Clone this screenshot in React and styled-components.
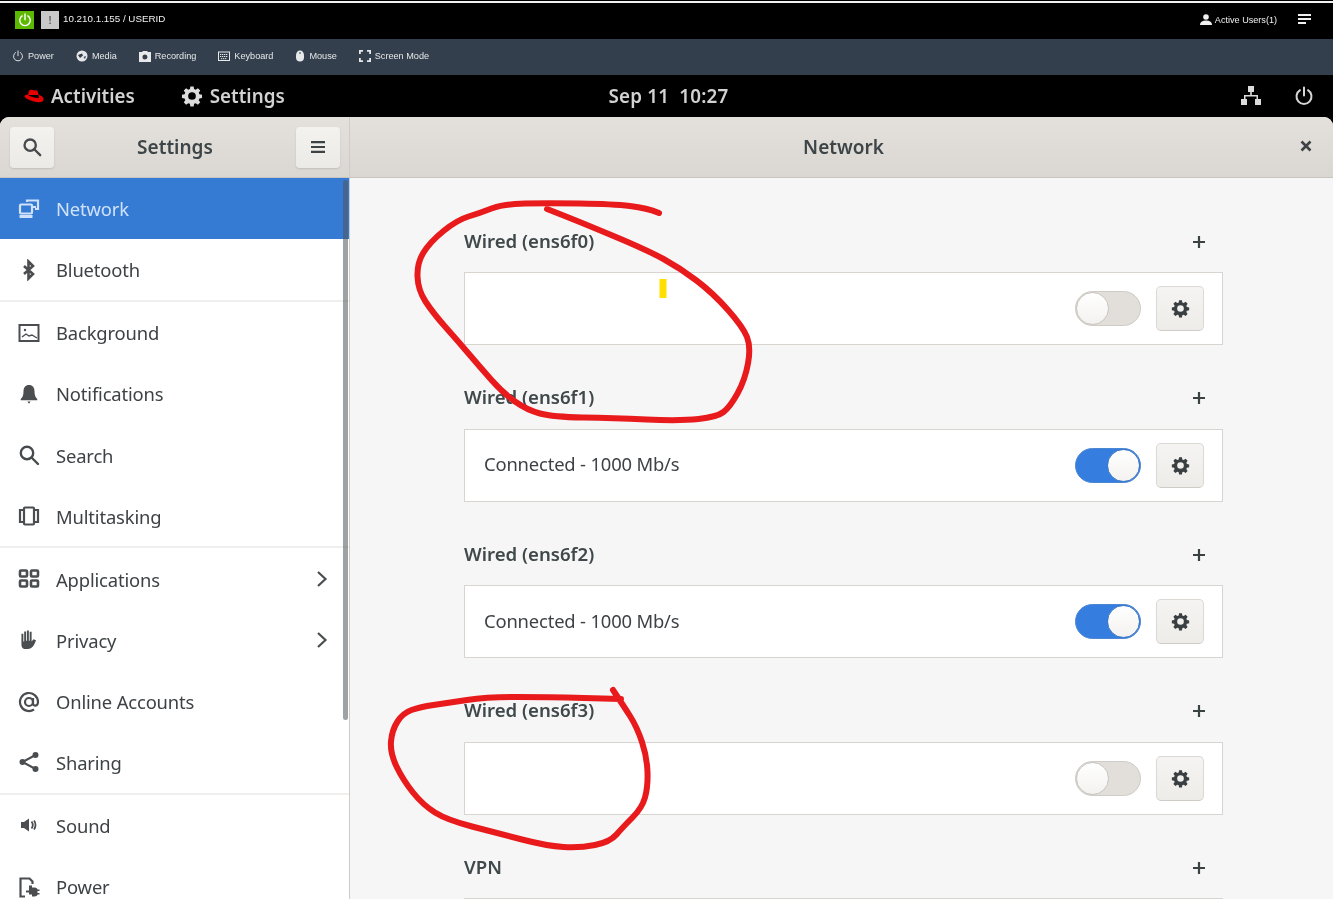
import React from "react";
import styled, { createGlobalStyle } from "styled-components";

const Global = createGlobalStyle`
  html, body { margin: 0; padding: 0; background: #000; }
  body { height: 899px; overflow: hidden; font-family: "Noto Sans", "Open Sans", sans-serif; }
`;

const Page = styled.div`
  position: relative;
  width: 1333px;
  height: 899px;
  overflow: hidden;
  background: #000;
  filter: blur(0.5px);
`;
const TopLine = styled.div`
  height: 2px;
  margin-top: 1px;
  background: #f2f2f2;
`;
const KvmBar = styled.div`
  height: 36px;
  box-sizing: border-box;
  background: #000;
  display: flex;
  align-items: center;
  padding: 0 22px 3px 15px;
  color: #f0f0f0;
  font: 9.8px "Liberation Sans", Arial, sans-serif;
`;
const PowerBox = styled.div`
  width: 19px;
  height: 18px;
  background: #5cb800;
  display: flex;
  align-items: center;
  justify-content: center;
  margin-right: 7px;
`;
const AlertBox = styled.div`
  width: 18px;
  height: 18px;
  background: #c9c9c9;
  color: #666;
  font-weight: 700;
  font-size: 11px;
  display: flex;
  align-items: center;
  justify-content: center;
  margin-right: 4px;
`;
const Address = styled.span`
  margin-top: -2px;
`;
const Spacer = styled.div`
  flex: 1;
`;
const Users = styled.div`
  display: flex;
  align-items: center;
  gap: 3px;
  font-size: 9.1px;
  margin-right: 21px;
`;
const KvmNav = styled.div`
  height: 36px;
  box-sizing: border-box;
  padding: 0 0 2px 12px;
  background: #333f4c;
  display: flex;
  align-items: center;
  gap: 22px;
  color: #e6e8ea;
  font: 9.15px "Liberation Sans", Arial, sans-serif;
`;
const NavItem = styled.div`
  display: flex;
  align-items: center;
  gap: 4px;
`;
const ShellBar = styled.div`
  height: 42px;
  background: #000;
  color: #d2d2d2;
  display: grid;
  grid-template-columns: 1fr auto 1fr;
  align-items: center;
  font-size: 18.8px;
  font-weight: 600;
`;
const ShellLeft = styled.div`
  display: flex;
  align-items: center;
  padding-left: 24px;
`;
const ShellApp = styled.div`
  display: flex;
  align-items: center;
  gap: 7px;
  margin-left: 46px;
`;
const Activities = styled.div`
  display: flex;
  align-items: center;
  gap: 7px;
`;
const Clock = styled.div`
  white-space: pre;
  padding-left: 4px;
  letter-spacing: 0.2px;
`;
const ShellRight = styled.div`
  display: flex;
  align-items: center;
  justify-content: flex-end;
  gap: 33px;
  padding-right: 19px;
`;
const Window = styled.div`
  height: 782px;
  border-radius: 9px 9px 0 0;
  overflow: hidden;
  background: #f6f6f6;
  display: grid;
  grid-template-columns: 350px 1fr;
  grid-template-rows: 61px 1fr;
`;
const HeaderBase = styled.div`
  background: linear-gradient(#e4e1dc, #dad7d2);
  border-bottom: 1px solid #c8c5c0;
  box-sizing: border-box;
  display: flex;
  align-items: center;
  color: #3d4548;
  font-size: 19px;
  font-weight: 600;
`;
const LeftHeader = styled(HeaderBase)`
  justify-content: space-between;
  padding: 0 9px 0 10px;
  border-right: 1px solid #cfccc7;
`;
const RightHeader = styled(HeaderBase)`
  position: relative;
  justify-content: center;
  padding-left: 4px;
`;
const HeaderButton = styled.div`
  width: 44px;
  height: 41px;
  border-radius: 4px;
  background: linear-gradient(#f3f2ef, #eceae6);
  box-shadow: 0 1px 2px rgba(0, 0, 0, 0.12);
  display: flex;
  align-items: center;
  justify-content: center;
`;
const CloseIcon = styled.div`
  position: absolute;
  right: 21px;
  top: 23px;
  line-height: 0;
`;
const Sidebar = styled.div`
  position: relative;
  background: #fff;
  border-right: 1px solid #cfccc7;
  box-sizing: border-box;
  overflow: hidden;
`;
const Scrollbar = styled.div`
  position: absolute;
  right: 1px;
  top: 2px;
  width: 5px;
  height: 540px;
  border-radius: 3px;
  background: rgba(80, 85, 90, 0.55);
`;
const Row = styled.div`
  height: ${(p) => (p.$sep ? 62.7 : 61.25)}px;
  display: flex;
  align-items: center;
  gap: 16px;
  padding: 0 21px 0 18px;
  box-sizing: border-box;
  font-size: 18.4px;
  letter-spacing: -0.15px;
  background: ${(p) => (p.$active ? "#357bd4" : "transparent")};
  color: ${(p) => (p.$active ? "#cfe2fa" : "#3d4245")};
  border-bottom: ${(p) => (p.$sep ? "2px solid #f0efed" : "none")};
`;
const RowIcon = styled.div`
  width: 22px;
  height: 22px;
  flex: none;
  line-height: 0;
`;
const RowLabel = styled.span`
  flex: 1;
`;
const Main = styled.div`
  position: relative;
  background: #f6f6f6;
  overflow: hidden;
  padding: 47px 110px 0 114px;
`;
const Section = styled.section`
  height: 156.6px;
`;
const SectionHead = styled.div`
  height: 30px;
  display: flex;
  align-items: center;
  justify-content: space-between;
  padding-right: 17px;
  margin-bottom: 17px;
  font-size: 18.6px;
  font-weight: 600;
  color: #3f484a;
`;
const PlusMark = styled.svg`
  margin-top: 3px;
`;
const Card = styled.div`
  height: 73px;
  background: #fff;
  border: 1px solid #d8d4d0;
  box-sizing: border-box;
  display: flex;
  align-items: center;
  padding: 0 18px 0 19px;
  font-size: 18.4px;
  letter-spacing: -0.17px;
  color: #3d4245;
`;
const Status = styled.span`
  flex: 1;
  padding-bottom: 3px;
`;
const Toggle = styled.div`
  width: 66px;
  height: 35px;
  box-sizing: border-box;
  border-radius: 18px;
  border: 1px solid ${(p) => (p.$on ? "#4b86d2" : "#cfcbc6")};
  background: ${(p) => (p.$on ? "#357ee0" : "#e2dfdb")};
  display: flex;
  justify-content: ${(p) => (p.$on ? "flex-end" : "flex-start")};
  margin-right: 15px;
`;
const Knob = styled.div`
  width: 33px;
  height: 33px;
  border-radius: 50%;
  box-sizing: border-box;
  background: linear-gradient(#fff, #f3f2f0);
  border: 1px solid ${(p) => (p.$on ? "#3f78c4" : "#c9c5c0")};
`;
const GearButton = styled.div`
  width: 48px;
  height: 45px;
  box-sizing: border-box;
  border-radius: 5px;
  border: 1px solid #dcd9d5;
  border-bottom-color: #cfccc7;
  background: linear-gradient(#f5f4f2, #eeece9);
  display: flex;
  align-items: center;
  justify-content: center;
`;
const Ink = styled.svg`
  position: absolute;
  left: 0;
  top: 0;
  pointer-events: none;
`;

const smooth = (pts) => {
  let d = `M${pts[0][0]} ${pts[0][1]}`;
  for (let i = 1; i < pts.length - 1; i++) {
    const mx = (pts[i][0] + pts[i + 1][0]) / 2;
    const my = (pts[i][1] + pts[i + 1][1]) / 2;
    d += ` Q${pts[i][0]} ${pts[i][1]} ${mx} ${my}`;
  }
  const l = pts[pts.length - 1];
  return d + ` L${l[0]} ${l[1]}`;
};

const loopA = [[659, 213],[647,208],[613,204],[547,203],[503,204],[480,213],[457,220],[430,242],[417,263],[418,290],[433,313],[457,340],[480,367],[503,393],[527,410],[553,417],[613,418],[680,421],[717,417],[730,407],[745,380],[751,347],[743,327],[713,293],[680,268],[647,250],[580,222],[547,209]];
const loopB = [[613,690],[623,705],[637,727],[647,757],[648,787],[642,808],[623,827],[610,842],[580,848],[547,846],[497,833],[447,820],[423,805],[403,780],[390,753],[392,730],[403,713],[420,707],[447,703],[487,697],[547,697],[621,699]];

const G = ({ size = 22, color = "#4a4e50", vb = "0 0 16 16", children }) => (
  <svg width={size} height={size} viewBox={vb} fill={color}>{children}</svg>
);
const gearPath = "M6.8 1h2.4l.3 1.9 1.2.5 1.6-1.1 1.7 1.7-1.1 1.6.5 1.2 1.9.3v2.4l-1.9.3-.5 1.2 1.1 1.6-1.7 1.7-1.6-1.1-1.2.5-.3 1.9H6.8l-.3-1.9-1.2-.5-1.6 1.1L2 12.6l1.1-1.6-.5-1.2-1.9-.3V7.1l1.9-.3.5-1.2L2 4l1.7-1.7 1.6 1.1 1.2-.5zM8 5.2a2.8 2.8 0 1 0 0 5.6 2.8 2.8 0 0 0 0-5.6z";
const Gear = ({ size = 19, color = "#3a3f41" }) => (
  <G size={size} color={color}><path fillRule="evenodd" d={gearPath} /></G>
);
const Plus = () => (
  <PlusMark width="14" height="14" viewBox="0 0 14 14"><path d="M7 1v12M1 7h12" stroke="#3a4244" strokeWidth="2.2" /></PlusMark>
);
const SearchIc = ({ size = 22, w = 2 }) => (
  <svg width={size} height={size} viewBox="0 0 22 22" fill="none" stroke="#474b4d" strokeWidth={w + 0.4}>
    <circle cx="9" cy="9" r="6.2" /><path d="M13.5 13.5L20 20" strokeLinecap="round" />
  </svg>
);
const Chevron = () => (
  <svg width="12" height="18" viewBox="0 0 12 18" fill="none" stroke="#4a4e50" strokeWidth="2.2"><path d="M2 2l7.5 7L2 16" /></svg>
);
const PowerIc = ({ size = 20, color = "#d6d6d6", w = 2 }) => (
  <svg width={size} height={size} viewBox="0 0 20 20" fill="none" stroke={color} strokeWidth={w} strokeLinecap="round">
    <path d="M6 4.2a7.5 7.5 0 1 0 8 0M10 1.5v8" />
  </svg>
);

const icons = {
  Network: (
    <svg width="22" height="22" viewBox="0 0 22 22" fill="none" stroke="#cfe2fa" strokeWidth="2.2"><rect x="2" y="6.5" width="12" height="9" rx="1" /><path d="M9 4V2.500h11V11h-3" /><path d="M1.500 18.500h13" strokeWidth="2.800" /><path d="M15 9h3" /></svg>
  ),
  Bluetooth: (
    <svg width="22" height="22" viewBox="0 0 22 22" fill="none" stroke="#4a4e50" strokeWidth="2.6"><path d="M6 7l9 8-4.500 4.500v-17L15 7l-9 8" /></svg>
  ),
  Background: (
    <svg width="22" height="22" viewBox="0 0 22 22" fill="none" stroke="#4a4e50" strokeWidth="2"><rect x="1.500" y="3" width="19" height="16" /><path d="M4 15l4-3 3 2 3-1 5 3" strokeWidth="1.400" /><circle cx="7" cy="8" r="1.200" fill="#4a4e50" stroke="none" /></svg>
  ),
  Notifications: (
    <G><path d="M8 1.500c2.600 0 4 2 4 4.500 0 3 .7 4.500 2 5.500v1H2v-1c1.300-1 2-2.500 2-5.500C4 3.500 5.400 1.500 8 1.500zM6.800 13.500h2.400L8 15z" /></G>
  ),
  Search: <SearchIc />,
  Multitasking: (
    <svg width="22" height="22" viewBox="0 0 22 22" fill="none" stroke="#4a4e50" strokeWidth="2.200"><rect x="6" y="2.500" width="10" height="17" rx="1" /><path d="M6 5H2v12h4M16 5h4v12h-4" /></svg>
  ),
  Applications: (
    <svg width="22" height="22" viewBox="0 0 22 22" fill="none" stroke="#4a4e50" strokeWidth="2.600"><rect x="2" y="2.500" width="7" height="6" rx="1" /><rect x="13" y="2.500" width="7" height="6" rx="1" /><rect x="2" y="12.500" width="7" height="6" rx="1" /><rect x="13" y="12.500" width="7" height="6" rx="1" /></svg>
  ),
  Privacy: (
    <G><path d="M2.500 3.500h1.400V9h.6V1.800h1.400V8.500h.6V1h1.400v7.500h.6V2h1.400v7l1.300-1.500 1.900.7c-1 3-2.600 6.300-6 6.300H5.500c-2.200 0-3-1.500-3-3.500z" /></G>
  ),
  "Online Accounts": (
    <svg width="22" height="22" viewBox="0 0 22 22" fill="none" stroke="#4a4e50" strokeWidth="2.200"><circle cx="11" cy="11" r="4" /><path d="M15 7v5.500c0 3 5 3 5-1.500a9 9 0 1 0-4 7.500" /></svg>
  ),
  Sharing: (
    <svg width="22" height="22" viewBox="0 0 22 22" fill="#4a4e50" stroke="#4a4e50" strokeWidth="2"><path d="M17.500 4L4.500 11l13 7" fill="none" /><circle cx="17.500" cy="4" r="2" /><circle cx="4.500" cy="11" r="2" /><circle cx="17.500" cy="18" r="2" /></svg>
  ),
  Sound: (
    <svg width="22" height="22" viewBox="0 0 22 22" fill="#4a4e50"><path d="M3 8h3l5-3.500v13L6 14H3z" /><path d="M13.500 7.500c1.500 2 1.500 5 0 7M16 6.500c2 2.500 2 6.500 0 9" fill="none" stroke="#4a4e50" strokeWidth="1.800" /></svg>
  ),
  Power: (
    <svg width="22" height="22" viewBox="0 0 22 22" fill="#4a4e50"><path d="M7 20.500H2.500v-18h9l3 3v2.500" fill="none" stroke="#4a4e50" strokeWidth="2.200" /><path d="M11 9.500h3v2h2.500c2 0 3 1.300 3 2h2v1.500h-2v2h2v1.500h-2c0 .8-1 2-3 2H14v-2h-3v-2H8v-2h3z" /></svg>
  ),
};

const groups = [
  [["Network", true], ["Bluetooth", false, true]],
  [["Background"], ["Notifications"], ["Search"], ["Multitasking", false, true]],
  [["Applications", false, false, true], ["Privacy", false, false, true], ["Online Accounts"], ["Sharing", false, true]],
  [["Sound"], ["Power"]],
];

const sections = [
  { name: "Wired (ens6f0)", status: "", on: false },
  { name: "Wired (ens6f1)", status: "Connected - 1000 Mb/s", on: true },
  { name: "Wired (ens6f2)", status: "Connected - 1000 Mb/s", on: true },
  { name: "Wired (ens6f3)", status: "", on: false },
];

const NavIcon = ({ kind }) => {
  const c = "#e6e8ea";
  if (kind === "Power") return <PowerIc size={12} color={c} w={1.600} />;
  if (kind === "Media") return (
    <svg width="12" height="12" viewBox="0 0 12 12" fill={c}><circle cx="6" cy="6" r="5.500" /><path d="M2 5l4-1.500 1 2L4 8zM7.500 7l2.500-1-1 3z" fill="#333f4c" /></svg>
  );
  if (kind === "Recording") return (
    <svg width="12" height="12" viewBox="0 0 12 12" fill={c}><path fillRule="evenodd" d="M0 2h3l1-1h4l1 1h3v10H0zM6 4.500a2.500 2.500 0 1 0 0 5 2.500 2.500 0 0 0 0-5z" /></svg>
  );
  if (kind === "Keyboard") return (
    <svg width="12" height="12" viewBox="0 0 12 12" fill="none" stroke={c}><rect x=".5" y="2" width="11" height="8.500" /><path d="M2 4.500h8M2 6.500h8M3 8.700h6" strokeDasharray="1.300 .7" /></svg>
  );
  if (kind === "Mouse") return (
    <svg width="10" height="12" viewBox="0 0 10 12" fill={c}><path d="M5 .5c2.500 0 4 2 4 5v2c0 2.500-1.500 4-4 4s-4-1.500-4-4v-2c0-3 1.500-5 4-5z" /><path d="M4.500 2h1v2h-1z" fill="#333f4c" /></svg>
  );
  return (
    <svg width="12" height="12" viewBox="0 0 12 12" fill="none" stroke={c} strokeWidth="1.800"><path d="M.9 4V.9H4M8 .9h3.100V4M11.100 8v3.100H8M4 11.100H.9V8" /></svg>
  );
};

export default function App() {
  return (
    <Page>
      <Global />
      <TopLine />
      <KvmBar>
        <PowerBox><PowerIc size={14} color="#fff" w={2} /></PowerBox>
        <AlertBox>!</AlertBox>
        <Address>10.210.1.155 / USERID</Address>
        <Spacer />
        <Users>
          <svg width="12" height="11" viewBox="0 0 12 11" fill="#f0f0f0"><circle cx="6" cy="3" r="2.800" /><path d="M0 11c0-3 2-4.500 6-4.500S12 8 12 11z" /></svg>
          Active Users(1)
        </Users>
        <svg width="13" height="11" viewBox="0 0 13 11" fill="#f0f0f0"><path d="M0 0h13v2H0zM0 4h13v2H0zM0 8h8v2H0z" /></svg>
      </KvmBar>
      <KvmNav>
        {["Power", "Media", "Recording", "Keyboard", "Mouse", "Screen Mode"].map((n) => (
          <NavItem key={n}><NavIcon kind={n} />{n}</NavItem>
        ))}
      </KvmNav>
      <ShellBar>
        <ShellLeft>
          <Activities>
            <svg width="20" height="15" viewBox="0 0 20 15" fill="#e60000"><path d="M5.500 1.200c1.500-1 3.500.3 5 .3s2-.8 3 .8c.6 1 .8 2.700 1.200 3.700L4 6c.4-1.500.6-3.800 1.500-4.800z" /><path d="M3.500 5.500C6 7.500 10 9 15 9c0-1.500-.3-2.300-.6-3.300 2.600.8 5.100 2 5.100 4.300 0 2.300-2 3.500-5 3.200C9 12.800.5 9.500.5 7.500c0-1.200 1.500-2 3-2z" /></svg>
            Activities
          </Activities>
          <ShellApp><Gear size={22} color="#dcdcdc" />Settings</ShellApp>
        </ShellLeft>
        <Clock>Sep 11  10:27</Clock>
        <ShellRight>
          <svg width="20" height="20" viewBox="0 0 20 20" fill="#dcdcdc"><path d="M7 0h6v6h-2.200v3H17v4h3v6h-6v-6h1.500v-2.500h-11V13H6v6H0v-6h3V9h6.200V6H7z" /></svg>
          <PowerIc />
        </ShellRight>
      </ShellBar>
      <Window>
        <LeftHeader>
          <HeaderButton><SearchIc size={20} w={2.200} /></HeaderButton>
          <span>Settings</span>
          <HeaderButton>
            <svg width="14" height="12" viewBox="0 0 14 12" fill="#3d4245"><path d="M0 0h14v2.200H0zM0 4.900h14v2.200H0zM0 9.800h14V12H0z" /></svg>
          </HeaderButton>
        </LeftHeader>
        <RightHeader>
          <span>Network</span>
          <CloseIcon>
            <svg width="12" height="12" viewBox="0 0 12 12"><path d="M1.500 1.500l9 9M10.500 1.500l-9 9" stroke="#3d4245" strokeWidth="2.600" /></svg>
          </CloseIcon>
        </RightHeader>
        <Sidebar>
          {groups.flat().map(([label, active, sep, more]) => (
            <Row key={label} $active={active} $sep={sep}>
              <RowIcon>{icons[label]}</RowIcon>
              <RowLabel>{label}</RowLabel>
              {more && <Chevron />}
            </Row>
          ))}
          <Scrollbar />
        </Sidebar>
        <Main>
          {sections.map((s) => (
            <Section key={s.name}>
              <SectionHead>{s.name}<Plus /></SectionHead>
              <Card>
                <Status>{s.status}</Status>
                <Toggle $on={s.on}><Knob $on={s.on} /></Toggle>
                <GearButton><Gear /></GearButton>
              </Card>
            </Section>
          ))}
          <Section>
            <SectionHead>VPN<Plus /></SectionHead>
            <Card />
          </Section>
        </Main>
      </Window>
      <Ink width="1333" height="899" viewBox="0 0 1333 899" fill="none" stroke="#e81a1c" strokeWidth="6" strokeLinecap="round" strokeLinejoin="round">
        <rect x="659.500" y="279" width="7" height="19" fill="#ffdf00" stroke="none" />
        <path d={smooth(loopA)} />
        <path d={smooth(loopB)} />
      </Ink>
    </Page>
  );
}
